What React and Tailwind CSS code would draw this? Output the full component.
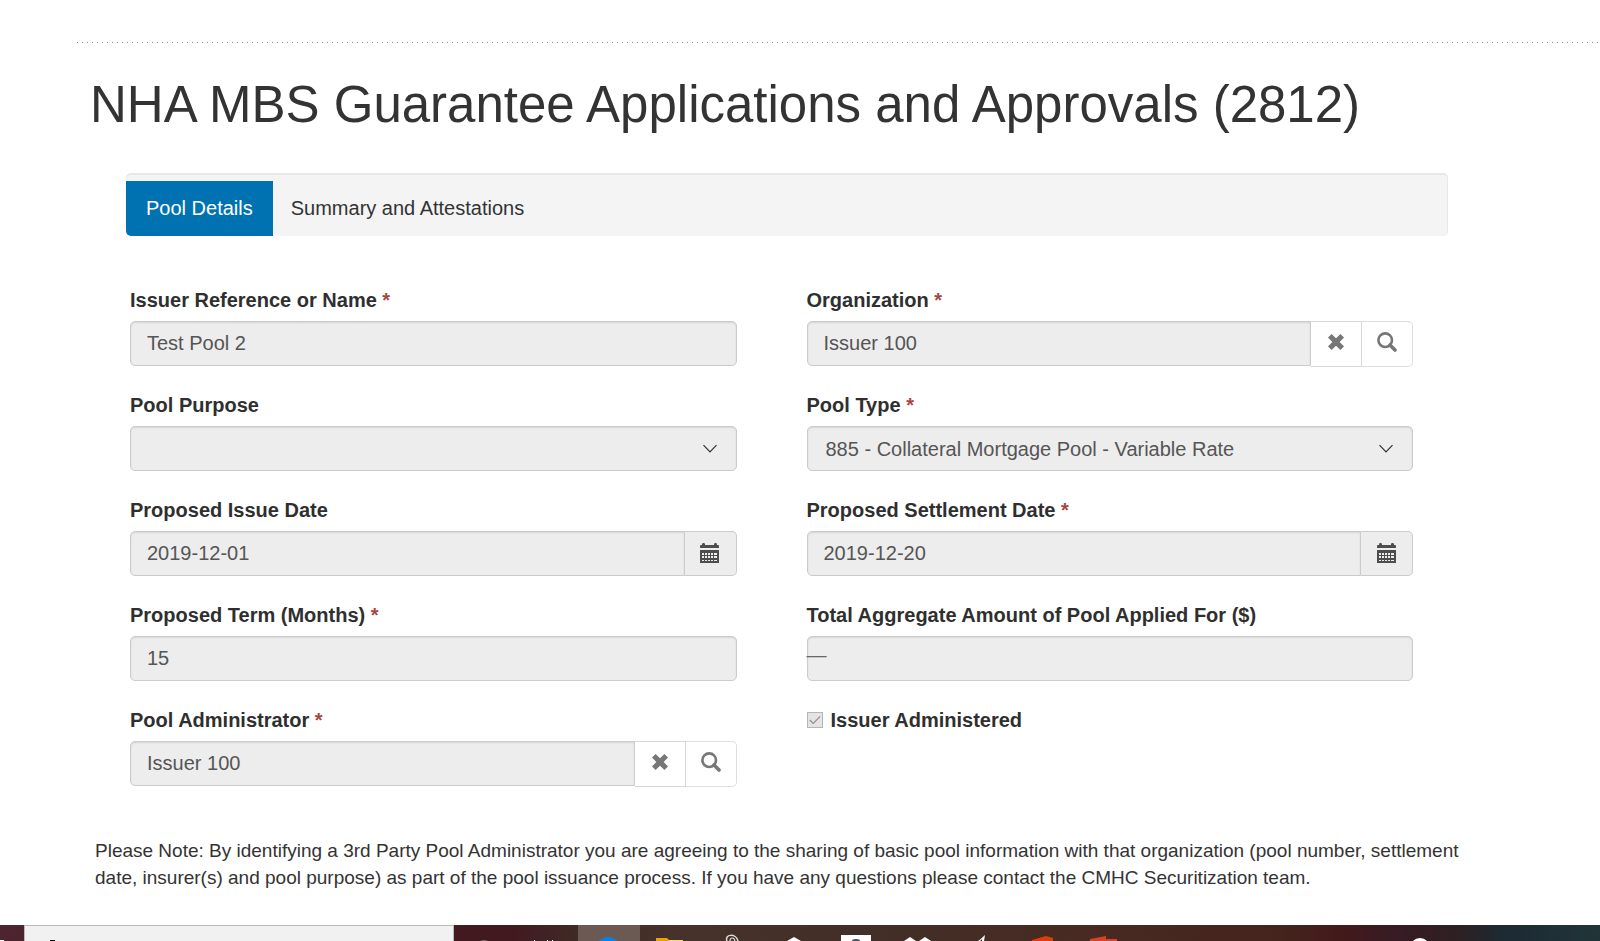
import React from "react";

const FIELD =
  "w-full h-[45px] rounded-[5px] border border-[#cbcbcb] bg-[#ededed] text-[20px] leading-7 text-[#555] shadow-[inset_0_1px_2px_rgba(0,0,0,0.1)]";

function Label({ htmlFor, required, children }) {
  return (
    <label htmlFor={htmlFor} className="block text-[20px] leading-7 font-bold text-[#2f2f2f]">
      {children}
      {required && <span className="font-bold text-[#a94442]"> *</span>}
    </label>
  );
}

function Field({ id, label, required, children }) {
  return (
    <div className="flex min-w-0 flex-col gap-[7px]">
      <Label htmlFor={id} required={required}>{label}</Label>
      <div className="relative flex h-[45px] items-start">{children}</div>
    </div>
  );
}

function TextField({ id, label, required, value, dash }) {
  return (
    <Field id={id} label={label} required={required}>
      <input id={id} type="text" disabled defaultValue={value} className={`${FIELD} px-4`} />
      {dash && <span className="absolute left-0 top-[5px] text-[20px] leading-7 text-[#666]">—</span>}
    </Field>
  );
}

function SelectField({ id, label, required, value }) {
  return (
    <Field id={id} label={label} required={required}>
      <select id={id} disabled defaultValue={value} className={`${FIELD} appearance-none px-[18px] opacity-100`}>
        <option value={value}>{value}</option>
      </select>
      <svg className="pointer-events-none absolute right-5 top-[18px]" width="14" height="10" viewBox="0 0 14 10" fill="none" stroke="#333" strokeWidth="1.2">
        <path d="M0.5 1.2 L7 8 L13.5 1.2" />
      </svg>
    </Field>
  );
}

function LookupField({ id, label, required, value }) {
  return (
    <Field id={id} label={label} required={required}>
      <input id={id} type="text" disabled defaultValue={value} className={`${FIELD} min-w-0 flex-1 rounded-r-none px-4`} />
      <button type="button" aria-label="Clear" className="flex h-[46px] w-[51px] shrink-0 items-center justify-center border-y border-r border-[#d8d8d8] bg-white pb-1">
        <svg width="18" height="18" viewBox="0 0 18 18" fill="#777">
          <path d="M4.6 1 L9 5.2 L13.4 1 L17 4.4 L12.7 9 L17 13.6 L13.4 17 L9 12.8 L4.6 17 L1 13.6 L5.3 9 L1 4.4 Z" />
        </svg>
      </button>
      <button type="button" aria-label="Search" className="flex h-[46px] w-[51px] shrink-0 items-center justify-center rounded-r-[5px] border-y border-r border-[#dedede] bg-white pb-1">
        <svg width="20" height="20" viewBox="0 0 20 20" fill="none" stroke="#777">
          <circle cx="8.2" cy="8.2" r="6.8" strokeWidth="2.6" />
          <path d="M13 13 L18 18" strokeWidth="3.6" strokeLinecap="round" />
        </svg>
      </button>
    </Field>
  );
}

function DateField({ id, label, required, value }) {
  return (
    <Field id={id} label={label} required={required}>
      <input id={id} type="text" disabled defaultValue={value} className={`${FIELD} min-w-0 flex-1 rounded-r-none px-4`} />
      <button type="button" disabled aria-label="Choose date" className="flex h-[45px] w-[52px] shrink-0 items-center justify-center rounded-r-[5px] border-y border-r border-[#cbcbcb] bg-[#ededed] pb-0.5">
        <svg width="20" height="20" viewBox="0 0 20 20" fill="#4d4d4d">
          <path d="M0 5V3Q0 2 1 2H2V1Q2 0 3.5 0T5 1V2H14V1Q14 0 15.500 0T17 1V2H18Q19 2 19 3V5Z" />
          <path fillRule="evenodd" d="M0 7H19V20H0Z M2 10v2h2v-2Z M5 10v2h2v-2Z M8 10v2h2v-2Z M11 10v2h2v-2Z M14 10v2h3v-2Z M2 13v2h2v-2Z M5 13v2h2v-2Z M8 13v2h2v-2Z M11 13v2h2v-2Z M14 13v2h3v-2Z M2 17v1h2v-1Z M5 17v1h2v-1Z M8 17v1h2v-1Z M11 17v1h2v-1Z M14 17v1h3v-1Z" />
        </svg>
      </button>
    </Field>
  );
}

const TASKS = [
  { name: "Assistant", art: <path d="M26 16a5 2 0 0 1 8 0Z" fill="#a08c8c" /> },
  { name: "Task view", art: <path d="M18 15h1v1h-1ZM31 15h1v1h-1ZM36 15h1v1h-1Z" fill="#fff" /> },
  { name: "Browser", active: true, art: <circle cx="30" cy="24" r="12" fill="#0f7fe0" /> },
  {
    name: "Files",
    art: (
      <>
        <path d="M16 13h11l3 3H16Z" fill="#e8a50a" />
        <path d="M28 15h15v1H29Z" fill="#ffd76a" />
      </>
    ),
  },
  {
    name: "Clips",
    art: (
      <>
        <path d="M25 16C22 9 34 8 36 16" fill="none" stroke="#ddd" strokeWidth="1.5" />
        <path d="M28 16C28 12 32 12 33 16" fill="none" stroke="#ddd" strokeWidth="1.2" />
      </>
    ),
  },
  { name: "Home", art: <path d="M23 16L30 12L37 16Z" fill="#fff" /> },
  {
    name: "Contacts",
    art: (
      <>
        <path d="M15 10h30v6H15Z" fill="#fff" />
        <path d="M26 16a4 2 0 0 1 8 0Z" fill="#44505e" />
      </>
    ),
  },
  { name: "Storage", art: <path d="M16 16L22 12L28 16ZM31 16L37 12L43 16Z" fill="#fff" /> },
  { name: "Notes", art: <path d="M28 16Q31 14 35 10L34 16L32 16V14L30 16Z" fill="#fff" /> },
  { name: "Office", art: <path d="M20 15L34 11L41 13V16H20Z" fill="#dc3e08" /> },
  { name: "Slides", art: <path d="M16 14L32 11V14H43V16H16Z" fill="#d24625" /> },
];

function Taskbar() {
  return (
    <footer className="flex h-4 items-stretch overflow-hidden bg-[linear-gradient(90deg,#4e2430_0%,#42191f_29%,#41191f_32%,#402a25_36%,#46322a_42%,#422e26_56%,#482a22_68%,#44241d_80%,#43191b_84%,#371b24_87%,#2e1f22_91%,#1c2a33_94%,#213539_100%)]">
      <button type="button" aria-label="Start" className="w-6 shrink-0">
        <svg className="block" width="24" height="16"><path d="M0 15h4v1H0Z" fill="#fff" /></svg>
      </button>
      <div className="flex w-[430px] shrink-0 border-x border-t border-[#b9b9b9] bg-[#f1f1f1]">
        <svg className="mt-auto ml-6 block" width="8" height="2"><path d="M1 1h5v1H1Z" fill="#111" /></svg>
      </div>
      {TASKS.map((task) => (
        <button key={task.name} type="button" aria-label={task.name} className={`w-[62px] shrink-0 ${task.active ? "bg-[#6b5a53]" : ""}`}>
          <svg className="block" width="60" height="16" viewBox="0 0 60 16">{task.art}</svg>
        </button>
      ))}
      <button type="button" aria-label="Account" className="ml-auto mr-[170px] w-5 shrink-0">
        <svg className="block" width="20" height="16"><circle cx="10" cy="23" r="10" fill="#fff" /></svg>
      </button>
    </footer>
  );
}

export default function App() {
  return (
    <div className="flex min-h-screen flex-col bg-white font-['Liberation_Sans',Arial,sans-serif] text-[#333]">
      <main className="flex-1">
        <svg className="mt-[42px] ml-[76px] block h-px w-full" aria-hidden="true">
          <line x1="1" y1="0.5" x2="100%" y2="0.5" stroke="#8a8a8a" strokeDasharray="1 4" shapeRendering="crispEdges" />
        </svg>
        <h1 className="mt-[30px] pl-[90px] text-[51px] leading-[64px]">NHA MBS Guarantee Applications and Approvals (2812)</h1>
        <nav className="mt-9 mr-[152px] ml-[126px] flex h-[63px] items-end overflow-hidden rounded-[5px] border-t-2 border-r border-[#e7e7e7] bg-[#f4f4f4]">
          <a href="#pool-details" aria-current="page" className="flex h-[55px] items-center bg-[#0072b1] px-5 pb-0.5 text-[20px] leading-7 text-white">Pool Details</a>
          <a href="#summary" className="flex h-[55px] items-center px-[18px] pb-0.5 text-[20px] leading-7 text-[#333]">Summary and Attestations</a>
        </nav>
        <form className="mt-[50px] mr-[187px] ml-[130px] grid grid-cols-2 gap-x-[70px] gap-y-[25px]">
          <TextField id="issuer-reference" label="Issuer Reference or Name" required value="Test Pool 2" />
          <LookupField id="organization" label="Organization" required value="Issuer 100" />
          <SelectField id="pool-purpose" label="Pool Purpose" value="" />
          <SelectField id="pool-type" label="Pool Type" required value="885 - Collateral Mortgage Pool - Variable Rate" />
          <DateField id="issue-date" label="Proposed Issue Date" value="2019-12-01" />
          <DateField id="settlement-date" label="Proposed Settlement Date" required value="2019-12-20" />
          <TextField id="term" label="Proposed Term (Months)" required value="15" />
          <TextField id="total-amount" label="Total Aggregate Amount of Pool Applied For ($)" value="" dash />
          <LookupField id="pool-administrator" label="Pool Administrator" required value="Issuer 100" />
          <div className="flex h-7 items-center gap-2">
            <span className="relative block size-4">
              <input id="issuer-administered" type="checkbox" disabled defaultChecked className="block size-4 appearance-none border border-[#b5b5b5] bg-[#e4e4e4]" />
              <svg className="pointer-events-none absolute inset-0" width="16" height="16" viewBox="0 0 16 16" fill="none" stroke="#8c8c8c" strokeWidth="1.1">
                <path d="M2.8 8 L6.2 11.4 L13.2 4.4" />
              </svg>
            </span>
            <Label htmlFor="issuer-administered">Issuer Administered</Label>
          </div>
        </form>
        <p className="mt-[51px] mr-[120px] mb-6 ml-[95px] text-[19px] leading-[27px]">
          Please Note: By identifying a 3rd Party Pool Administrator you are agreeing to the sharing of basic pool information with that organization (pool number, settlement date, insurer(s) and pool purpose) as part of the pool issuance process. If you have any questions please contact the CMHC Securitization team.
        </p>
      </main>
      <Taskbar />
    </div>
  );
}
